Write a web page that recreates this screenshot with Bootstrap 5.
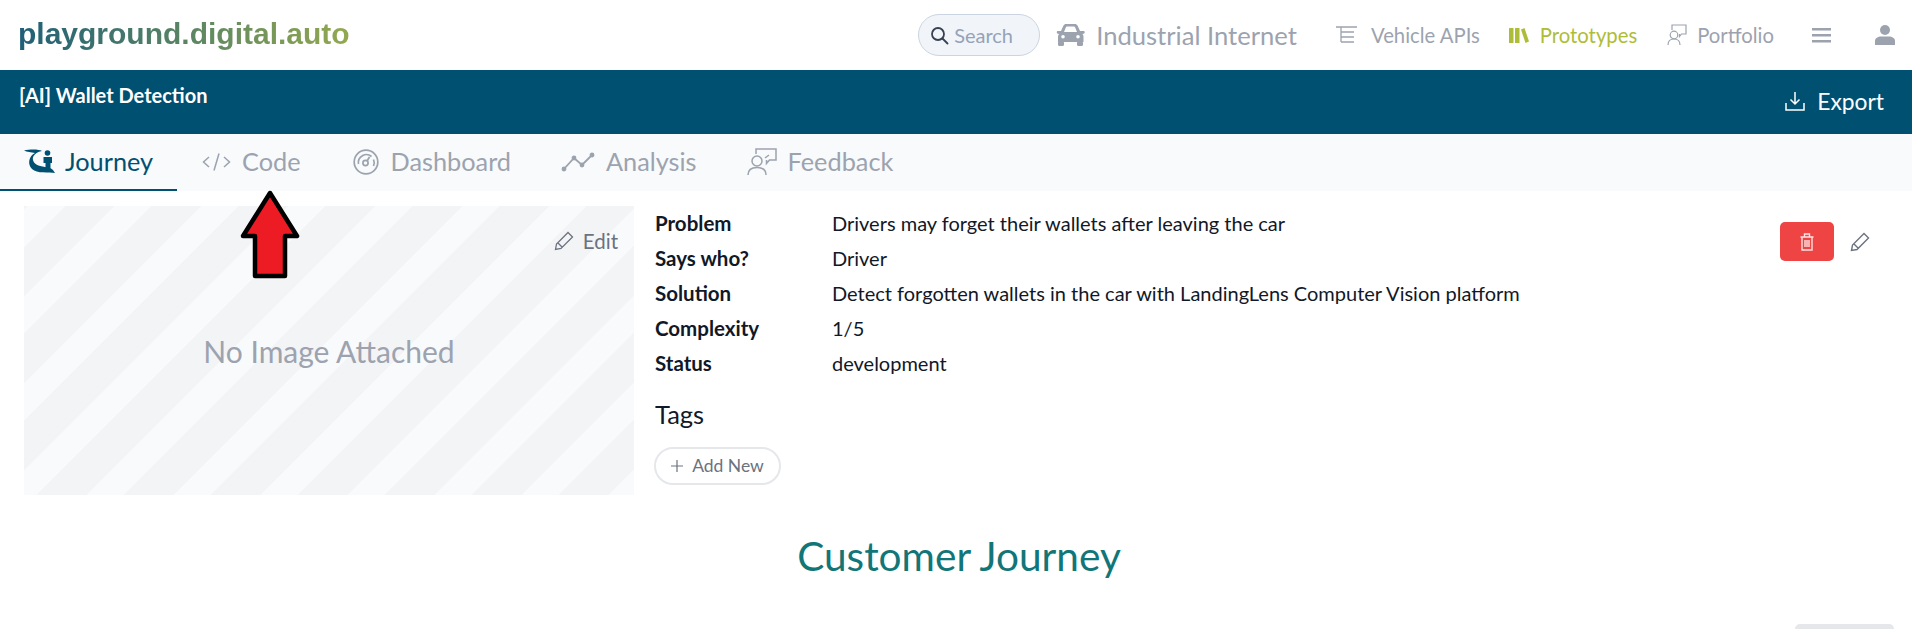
<!DOCTYPE html>
<html lang="en">
<head>
  <meta charset="UTF-8">
  <title>[AI] Wallet Detection</title>
  <link href="https://cdn.jsdelivr.net/npm/bootstrap@5.3.0/dist/css/bootstrap.min.css" rel="stylesheet">
  <style>
    body {
      font-family: 'Lato', sans-serif;
      background: #fff;
    }
    svg { flex-shrink: 0; display: block; }

    /* top bar */
    .top-bar { height: 70px; padding: 0 17px 0 18px; }
    .logo-text {
      font-family: 'Liberation Sans', sans-serif;
      font-weight: 700;
      font-size: 30px;
      line-height: 1.1;
      margin-top: -4px;
      background: linear-gradient(90deg, #1f5f78, #93a94f);
      -webkit-background-clip: text;
      background-clip: text;
      color: transparent;
    }
    .search-pill {
      width: 122px;
      height: 42px;
      margin-right: 16px;
      padding-left: 11px;
      gap: 5px;
      background: #f1f5f9;
      border: 1px solid #cbd5e1;
      border-radius: 21px;
      color: #94a3b8;
      font-size: 20px;
    }
    .model-name { color: #9ca3af; font-size: 25.6px; gap: 11px; }
    .top-link { color: #9ca3af; font-size: 20.3px; text-decoration: none; }
    .top-link.is-active { color: #aebd38; }
    .link-api { margin-left: 38px; gap: 13px; }
    .link-proto { margin-left: 29px; gap: 11px; }
    .link-folio { margin-left: 30px; gap: 10px; }
    .icon-menu { margin-left: 38px; }
    .icon-user { margin-left: 44px; }

    /* blue band */
    .title-band { height: 64px; background: #005072; color: #fff; padding: 0 28px 0 19px; }
    .title-band h1 { font-size: 20px; font-weight: 700; margin: 12px 0 0; line-height: 1.3; }
    .export-btn { color: #fff; font-size: 22.8px; gap: 12px; text-decoration: none; margin-top: -2px; }

    /* tabs */
    .tab-bar { height: 57px; background: #f8fafc; }
    .tab-item {
      height: 57px;
      color: #9ca3af;
      font-size: 25.3px;
      gap: 10px;
      text-decoration: none;
      border-bottom: 2px solid transparent;
    }
    .tab-item.is-active { color: #005072; border-bottom-color: #005072; width: 177px; padding-left: 24px; gap: 9px; }
    .tab-code { margin-left: 25px; gap: 11px; }
    .tab-dash { margin-left: 52px; gap: 12px; }
    .tab-analysis { margin-left: 50px; gap: 11px; }
    .tab-feedback { margin-left: 50px; gap: 11px; }

    /* prototype info */
    .info-block { padding: 15px 42px 0 24px; }
    .image-box {
      width: 610px;
      height: 289px;
      flex-shrink: 0;
      position: relative;
      color: #9ca3af;
      font-size: 30px;
      padding-top: 2px;
      background: repeating-linear-gradient(135deg, #f3f4f6 0 2.8px, #f9fafb 2.8px 29px, #f3f4f6 29px 61.5px);
    }
    .edit-link {
      position: absolute;
      top: 20px;
      right: 16px;
      color: #6b7280;
      font-size: 20.5px;
      gap: 9px;
      text-decoration: none;
    }
    .info-col { padding-left: 21px; }
    .info-row { height: 35px; line-height: 35px; font-size: 20px; color: #111827; }
    .info-label { width: 177px; font-weight: 700; font-size: 20.5px; }
    .tags-title { font-size: 25.5px; font-weight: 400; color: #111827; margin: 17px 0 16px; line-height: 1.3; }
    .add-tag {
      width: 127px;
      height: 38px;
      gap: 9px;
      border: 2px solid #e5e7eb;
      border-radius: 19px;
      color: #6b7280;
      font-size: 17.5px;
      margin-left: -1px;
    }
    .side-actions { margin-top: 16px; gap: 16px; }
    .delete-btn {
      width: 54px;
      height: 39px;
      padding: 0;
      background: #ef4444;
      border: 0;
      border-radius: 5px;
    }
    .journey-title {
      color: #127678;
      font-size: 40.6px;
      font-weight: 400;
      text-align: center;
      line-height: 48px;
      margin: 37px 0 0 6px;
    }
    .corner-btn {
      width: 99px;
      height: 5px;
      margin: 44px 18px 0 auto;
      background: #e5e7eb;
      border-radius: 6px 6px 0 0;
    }
    .hint-arrow { position: absolute; left: 240px; top: 189px; }
  </style>
</head>
<body>

<!-- barra superior -->
<div class="top-bar d-flex align-items-center">
  <div class="logo-text me-auto">playground.digital.auto</div>

  <div class="search-pill d-flex align-items-center">
    <svg width="19" height="19" viewBox="0 0 19 19" fill="none" stroke="#374151" stroke-width="1.8"><circle cx="8" cy="8" r="6"/><path d="M12.5 12.5 L17.5 17.5" stroke-linecap="round"/></svg>
    <span>Search</span>
  </div>

  <div class="model-name d-flex align-items-center">
    <svg width="29" height="22" viewBox="0 0 29 22" fill="#9ca3af"><path d="M7.5 1.5 C8 .6 9 0 10 0 h9 c1 0 2 .6 2.5 1.5 L24 7 h3.500 c.8 0 1.500.7 1.200 1.500 l-.4 1 -1.800.5 c.6.8 1 1.700 1 2.800 V18 H2 v-5.200 c0-1.100.4-2 1-2.800 L1.200 9.500 .8 8.500 C.5 7.700 1.200 7 2 7 h3 Z M8 8 h13 l-2-5 c-.2-.4-.5-.6-1-.6 h-7 c-.5 0-.8.2-1 .6 Z M7 11 a1.800 1.800 0 1 0 0 3.600 a1.800 1.800 0 1 0 0-3.600 Z M22 11 a1.800 1.800 0 1 0 0 3.600 a1.800 1.800 0 1 0 0-3.600 Z"/><rect x="2" y="17" width="6" height="5" rx="1.500"/><rect x="21" y="17" width="6" height="5" rx="1.500"/></svg>
    <span>Industrial Internet</span>
  </div>

  <a class="top-link link-api d-flex align-items-center" href="#">
    <svg width="23" height="20" viewBox="0 0 23 20" fill="none" stroke="#9ca3af" stroke-width="1.300"><path d="M1 2 H22 M6 2 V17 M6 7 H19 M6 12 H19 M6 17 H19"/></svg>
    <span>Vehicle APIs</span>
  </a>
  <a class="top-link link-proto is-active d-flex align-items-center" href="#">
    <svg width="20" height="15" viewBox="0 0 20 15" fill="#aebd38"><rect x="0" y="0" width="4.500" height="15" rx=".6"/><rect x="6" y="0" width="4.500" height="15" rx=".6"/><path d="M12 1.500 L15.500 0 L20 13.500 L16.500 15 Z"/></svg>
    <span>Prototypes</span>
  </a>
  <a class="top-link link-folio d-flex align-items-center" href="#">
    <svg width="20" height="22" viewBox="0 0 20 22" fill="none" stroke="#9ca3af" stroke-width="1.200"><path d="M5 6 V1 H19 V10 H14.500 L12.500 12.500 V10"/><circle cx="7" cy="11" r="3.800"/><path d="M1 21 C1 16.500 3.500 15 7 15 C10.500 15 13 16.500 13 21"/></svg>
    <span>Portfolio</span>
  </a>
  <svg class="icon-menu" width="19" height="15" viewBox="0 0 19 15" fill="#9ca3af"><rect width="19" height="2.500"/><rect y="6" width="19" height="2.500"/><rect y="12" width="19" height="2.500"/></svg>
  <svg class="icon-user" width="20" height="20" viewBox="0 0 20 20" fill="#9ca3af"><circle cx="10" cy="5" r="5"/><path d="M0 20 V16 C0 13 3 11.500 6 11.500 H14 C17 11.500 20 13 20 16 V20 Z"/></svg>
</div>

<!-- titulo del prototipo -->
<div class="title-band d-flex justify-content-between align-items-start">
  <h1>[AI] Wallet Detection</h1>
  <a class="export-btn d-flex align-items-center align-self-center" href="#">
    <svg width="20" height="20" viewBox="0 0 20 20" fill="none" stroke="#fff" stroke-width="1.500"><path d="M10 1 V13 M5.500 8.500 L10 13 L14.500 8.500 M1 12 V19 H19 V12"/></svg>
    <span>Export</span>
  </a>
</div>

<!-- tabs -->
<div class="tab-bar d-flex">
  <a class="tab-item is-active d-flex align-items-center" href="#">
    <svg width="32" height="25" viewBox="0 0 32 25" fill="#005072"><path d="M0 1.500 C6 0 15 0 18 2 C12 3 8 7 9 11 C10 15 14 17 21 18 C25 18.500 27 19 29 21 L31 24 C25 23 13 25 8 20 C3 15 5 7 11 4 C7 3 3 3 0 1.500 Z"/><circle cx="23.500" cy="4" r="2.800"/><path d="M19.500 8 H28 V14 H26.500 V21 H21.500 V14 H19.500 Z"/></svg>
    <span>Journey</span>
  </a>
  <a class="tab-item tab-code d-flex align-items-center" href="#">
    <svg width="29" height="20" viewBox="0 0 29 20" fill="none" stroke="#9ca3af" stroke-width="1.500"><path d="M7 5 L1.500 10 L7 15 M22 5 L27.500 10 L22 15 M17 1.500 L12 18.500"/></svg>
    <span>Code</span>
  </a>
  <a class="tab-item tab-dash d-flex align-items-center" href="#">
    <svg width="26" height="26" viewBox="0 0 26 26" fill="none" stroke="#9ca3af" stroke-width="1.700"><circle cx="13" cy="13" r="11.800"/><path d="M5.500 15 A8 8 0 0 1 18.500 7.500 M20.500 10.500 A8 8 0 0 1 20.500 17"/><circle cx="12.500" cy="14" r="2.600"/><path d="M14 12 L16.500 8"/></svg>
    <span>Dashboard</span>
  </a>
  <a class="tab-item tab-analysis d-flex align-items-center" href="#">
    <svg width="34" height="20" viewBox="0 0 34 20" fill="#9ca3af" stroke="#9ca3af" stroke-width="1.800"><path d="M3 17 L13 6 L21 13 L31 3" fill="none"/><circle cx="3" cy="17" r="1.500"/><circle cx="13" cy="6" r="1.500"/><circle cx="21" cy="13" r="1.500"/><circle cx="31" cy="3" r="1.500"/></svg>
    <span>Analysis</span>
  </a>
  <a class="tab-item tab-feedback d-flex align-items-center" href="#">
    <svg width="30" height="28" viewBox="0 0 30 28" fill="none" stroke="#9ca3af" stroke-width="1.500"><path d="M9 6 V1 H29 V12 H22.500 L19.500 15.500 V12"/><path d="M18 10 L22 7"/><circle cx="10" cy="13" r="5"/><path d="M1 27 C1 21.500 4.500 19.500 10 19.500 C15.500 19.500 19 21.500 19 27"/></svg>
    <span>Feedback</span>
  </a>
</div>

<!-- informacion -->
<div class="info-block d-flex align-items-start">
  <div class="image-box d-flex align-items-center justify-content-center">
    <span>No Image Attached</span>
    <a class="edit-link d-flex align-items-center" href="#">
      <svg width="20" height="20" viewBox="0 0 20 20" fill="none" stroke="#6b7280" stroke-width="1.300"><path d="M1.500 18.500 L2.500 13 L14 1.500 L18.500 6 L7 17.500 Z M4 12 L8 16"/></svg>
      <span>Edit</span>
    </a>
  </div>
  <div class="info-col">
    <div class="info-row d-flex align-items-baseline"><div class="info-label">Problem</div><div>Drivers may forget their wallets after leaving the car</div></div>
    <div class="info-row d-flex align-items-baseline"><div class="info-label">Says who?</div><div>Driver</div></div>
    <div class="info-row d-flex align-items-baseline"><div class="info-label">Solution</div><div>Detect forgotten wallets in the car with LandingLens Computer Vision platform</div></div>
    <div class="info-row d-flex align-items-baseline"><div class="info-label">Complexity</div><div>1/5</div></div>
    <div class="info-row d-flex align-items-baseline"><div class="info-label">Status</div><div>development</div></div>
    <h2 class="tags-title">Tags</h2>
    <div class="add-tag d-flex align-items-center justify-content-center">
      <svg width="12" height="12" viewBox="0 0 14 14" stroke="#6b7280" stroke-width="1.400"><path d="M7 0 V14 M0 7 H14"/></svg>
      <span>Add New</span>
    </div>
  </div>
  <div class="side-actions d-flex align-items-center ms-auto">
    <button class="delete-btn btn d-flex align-items-center justify-content-center" type="button" aria-label="Delete">
      <svg width="14" height="18" viewBox="0 0 14 18" fill="none" stroke="#fde2e2" stroke-width="1.400"><path d="M.5 4 H13.500 M4.500 4 V1 H9.500 V4 M2 4 V17 H12 V4 M5 7 V14 M7 7 V14 M9 7 V14"/></svg>
    </button>
    <svg width="20" height="20" viewBox="0 0 20 20" fill="none" stroke="#6b7280" stroke-width="1.400"><path d="M1.500 18.500 L2.500 13 L14 1.500 L18.500 6 L7 17.500 Z M4 12 L8 16"/></svg>
  </div>
</div>

<h2 class="journey-title">Customer Journey</h2>
<div class="corner-btn"></div>

<!-- flecha roja sobre la captura -->
<svg class="hint-arrow" width="60" height="91" viewBox="0 0 60 91"><path d="M30 4 L57 47 H45 V87 H15 V47 H3 Z" fill="#ed1c24" stroke="#000" stroke-width="4.500" stroke-linejoin="round"/></svg>

<script src="https://cdn.jsdelivr.net/npm/bootstrap@5.3.0/dist/js/bootstrap.bundle.min.js"></script>
</body>
</html>
